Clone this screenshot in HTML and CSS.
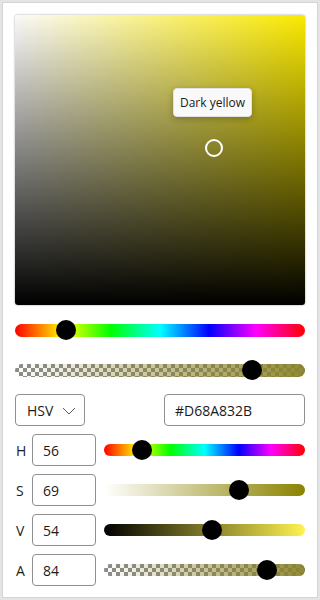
FILE: index.html
```html
<!DOCTYPE html>
<html>
<head>
<meta charset="utf-8">
<link rel="stylesheet" href="styles.css">
</head>
<body>
<div class="panel">
  <div class="spectrum">
    <div class="spec-v"></div>
    <div class="tooltip">Dark yellow</div>
    <div class="marker"></div>
  </div>
  <div class="slider big">
    <div class="track hue"></div>
    <div class="thumb" style="left: 41px"></div>
  </div>
  <div class="slider big alpha-top">
    <div class="track checker"><div class="fill alpha-fill"></div></div>
    <div class="thumb" style="left: 227px"></div>
  </div>
  <div class="controls">
    <div class="dropdown">
      <span>HSV</span>
      <svg class="chev" width="14" height="8" viewBox="0 0 14 8"><path d="M1 1 L7 7 L13 1" fill="none" stroke="#5c5c5c" stroke-width="1"/></svg>
    </div>
    <div class="input hex">#D68A832B</div>
  </div>
  <div class="row">
    <span class="lbl">H</span>
    <div class="input num">56</div>
    <div class="slider small">
      <div class="track hue"></div>
      <div class="thumb" style="left: 28px"></div>
    </div>
  </div>
  <div class="row">
    <span class="lbl">S</span>
    <div class="input num">69</div>
    <div class="slider small">
      <div class="track sat"></div>
      <div class="thumb" style="left: 125px"></div>
    </div>
  </div>
  <div class="row">
    <span class="lbl">V</span>
    <div class="input num">54</div>
    <div class="slider small">
      <div class="track val"></div>
      <div class="thumb" style="left: 98px"></div>
    </div>
  </div>
  <div class="row">
    <span class="lbl">A</span>
    <div class="input num">84</div>
    <div class="slider small">
      <div class="track checker"><div class="fill alpha-fill"></div></div>
      <div class="thumb" style="left: 153px"></div>
    </div>
  </div>
</div>
</body>
</html>
```
FILE: styles.css
```css
html, body {
  margin: 0;
  padding: 0;
}
body {
  background: #e4e4e4;
  padding: 2px;
  width: 320px;
  height: 600px;
  box-sizing: border-box;
  font-family: "Open Sans", "Noto Sans", sans-serif;
  color: #1b1b1b;
}
.panel {
  background: #ffffff;
  border: 1px solid #d4d4d4;
  box-sizing: border-box;
  width: 316px;
  height: 596px;
  padding: 12px;
  display: flex;
  flex-direction: column;
}
.spectrum {
  position: relative;
  width: 290px;
  height: 290px;
  box-sizing: border-box;
  border-radius: 3px;
  background: linear-gradient(to right, #ffffff, #ffee00);
  box-shadow: 0 0 2px rgba(0,0,0,0.45);
  overflow: visible;
  flex: none;
}
.spec-v {
  position: absolute;
  inset: 0;
  border-radius: 3px;
  background: linear-gradient(to bottom, rgba(0,0,0,0.02), rgba(0,0,0,1));
}
.tooltip {
  position: absolute;
  left: 158px;
  top: 73px;
  width: 79px;
  height: 29px;
  box-sizing: border-box;
  background: #f9f9f9;
  border: 1px solid #e2e2e2;
  border-radius: 4px;
  box-shadow: 0 2px 6px rgba(0,0,0,0.25);
  font-size: 12px;
  line-height: 27px;
  text-align: center;
  color: #1b1b1b;
}
.marker {
  position: absolute;
  left: 190px;
  top: 124px;
  width: 18px;
  height: 18px;
  box-sizing: border-box;
  border: 2px solid #ffffff;
  border-radius: 50%;
}
.slider {
  position: relative;
  height: 20px;
  display: flex;
  align-items: center;
  flex: none;
}
.slider.big {
  margin-top: 15px;
  width: 290px;
}
.slider.alpha-top {
  margin-top: 20px;
}
.track {
  width: 100%;
  height: 12px;
  border-radius: 6px;
  overflow: hidden;
}
.big .track {
  height: 13px;
  border-radius: 6.5px;
}
.fill {
  width: 100%;
  height: 100%;
}
.hue {
  background: linear-gradient(to right, #ff0000, #ffff00 17%, #00ff00 33%, #00ffff 50%, #0000ff 67%, #ff00ff 83%, #ff0000);
}
.checker {
  background-color: #ffffff;
  background-image: conic-gradient(#8c8c8c 25%, #ffffff 0 50%, #8c8c8c 0 75%, #ffffff 0);
  background-size: 8px 8px;
}
.alpha-fill {
  background: linear-gradient(to right, rgba(138,131,43,0), rgba(138,131,43,0.95));
}
.sat {
  background: linear-gradient(to right, #ffffff, #8a8300);
}
.val {
  background: linear-gradient(to right, #000000, #fff34f);
}
.thumb {
  position: absolute;
  top: 0;
  width: 20px;
  height: 20px;
  border-radius: 50%;
  background: #000000;
}
.controls {
  margin-top: 14px;
  display: flex;
  justify-content: space-between;
  flex: none;
}
.input, .dropdown {
  height: 32px;
  box-sizing: border-box;
  border: 1px solid #8f8f8f;
  border-radius: 4px;
  font-size: 14px;
  display: flex;
  align-items: center;
  background: #ffffff;
}
.dropdown {
  width: 70px;
  padding: 0 0 0 11px;
  gap: 9px;
}
.chev {
  margin-top: 1px;
}
.hex {
  width: 141px;
  padding-left: 10px;
}
.row {
  margin-top: 8px;
  display: flex;
  align-items: center;
  height: 32px;
  flex: none;
}
.lbl {
  width: 17px;
  font-size: 14px;
  padding-left: 1px;
  box-sizing: border-box;
}
.num {
  width: 64px;
  padding-left: 10px;
}
.slider.small {
  margin-left: 8px;
  flex: 1;
}
```
